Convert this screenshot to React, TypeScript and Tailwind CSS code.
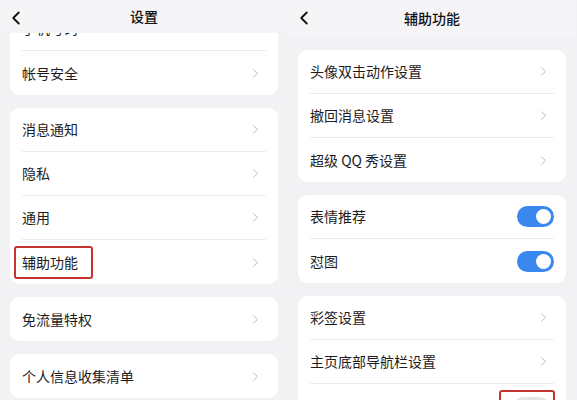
import { ChevronLeft, ChevronRight } from 'lucide-react';

const font = { fontFamily: '"Noto Sans CJK SC", "Noto Sans", sans-serif' };

const Arrow = () => <ChevronRight size={15} strokeWidth={1.5} className="text-[#b5b5b8] mr-[3px]" />;

const Toggle = ({ on = true }: { on?: boolean }) => (
  <div className={`w-[37px] h-[21px] rounded-full flex items-center px-[3px] ${on ? 'bg-[#3b87f0] justify-end' : 'bg-[#e4e4e6] justify-start'}`}>
    <div className="w-[15px] h-[15px] rounded-full bg-white" />
  </div>
);

const Row = ({ label, right, last = false }: { label: React.ReactNode; right?: React.ReactNode; last?: boolean }) => (
  <div className="px-3">
    <div className={`h-[44px] flex items-center justify-between ${last ? '' : 'border-b border-[#ececee]'}`}>
      <span className="text-[14px] text-[#1c1c1e]">{label}</span>
      {right ?? <Arrow />}
    </div>
  </div>
);

const Card = ({ children, className = '' }: { children: React.ReactNode; className?: string }) => (
  <div className={`bg-white rounded-[9px] ${className}`}>{children}</div>
);

const Header = ({ title, h }: { title: string; h: string }) => (
  <div className={`relative ${h} flex items-center justify-center bg-[#f5f5f7]`}>
    <ChevronLeft size={22} strokeWidth={2} className="absolute left-[5px] top-[7px] text-[#111]" />
    <span className="text-[14px] font-medium text-[#111] -mt-[1px]">{title}</span>
  </div>
);

const App = () => {
  return (
    <div className="w-[577px] h-[400px] flex overflow-hidden bg-[#f2f2f4]" style={font}>
      {/* left: 设置 */}
      <div className="w-[288px] flex flex-col">
        <Header title="设置" h="h-[33px]" />
        <div className="flex-1 overflow-hidden px-[10px]">
          <div className="-mt-[26px] flex flex-col gap-[13px]">
            <Card>
              <Row label="手机号码" />
              <Row label="帐号安全" last />
            </Card>
            <Card>
              <Row label="消息通知" />
              <Row label="隐私" />
              <Row label="通用" />
              <Row
                label={
                  <span className="inline-block -ml-[8px] pl-[6px] pr-[13px] py-[4px] border-2 border-[#c5332e] rounded-[3px]">
                    辅助功能
                  </span>
                }
                last
              />
            </Card>
            <Card>
              <Row label="免流量特权" last />
            </Card>
            <Card>
              <Row label="个人信息收集清单" last />
            </Card>
          </div>
        </div>
      </div>

      {/* right: 辅助功能 */}
      <div className="w-[289px] flex flex-col pr-[1px]">
        <Header title="辅助功能" h="h-[37px]" />
        <div className="flex-1 overflow-hidden px-[10px] pt-[13px]">
          <div className="flex flex-col gap-[13px]">
            <Card>
              <Row label="头像双击动作设置" />
              <Row label="撤回消息设置" />
              <Row label="超级 QQ 秀设置" last />
            </Card>
            <Card>
              <Row label="表情推荐" right={<Toggle />} />
              <Row label="怼图" right={<Toggle />} last />
            </Card>
            <Card>
              <Row label="彩签设置" />
              <Row label="主页底部导航栏设置" />
              <div className="px-3">
                <div className="h-[44px] flex items-center justify-between">
                  <span className="text-[14px] text-[#1c1c1e] mt-[6px]">深色模式下使用简洁背景</span>
                  <div className="-mr-[1px] mt-[6px] pl-[12px] pr-[3px] pt-[5px] pb-[8px] border-2 border-[#c5332e] rounded-[3px]">
                    <Toggle on={false} />
                  </div>
                </div>
              </div>
            </Card>
          </div>
        </div>
      </div>
    </div>
  );
};

export default App;
